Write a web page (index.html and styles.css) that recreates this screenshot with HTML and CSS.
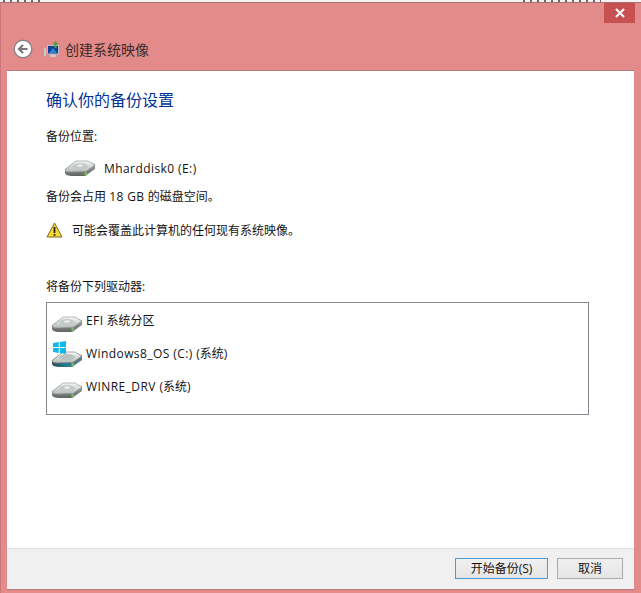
FILE: index.html
```html
<!DOCTYPE html>
<html lang="zh">
<head>
<meta charset="utf-8">
<title>创建系统映像</title>
<link rel="stylesheet" href="styles.css">
</head>
<body>
<svg class="defs" width="0" height="0" aria-hidden="true">
  <defs>
    <linearGradient id="top" x1="0" y1="0" x2="0" y2="1"><stop offset="0" stop-color="#f6f6f4"/><stop offset="1" stop-color="#b4bbb6"/></linearGradient>
    <linearGradient id="side" x1="0" y1="0" x2="0" y2="1"><stop offset="0" stop-color="#b0b3b2"/><stop offset="1" stop-color="#5f6463"/></linearGradient>
    <linearGradient id="sideos" x1="0" y1="0" x2="1" y2="0"><stop offset="0" stop-color="#3d4a50"/><stop offset=".45" stop-color="#1f7c96"/><stop offset="1" stop-color="#70787a"/></linearGradient>
    <symbol id="drive" viewBox="0 0 32 18">
      <path d="M1 10.500 12 2.500 31 5V10L21 17H7Q1 16.500 1 13.500Z" fill="url(#side)"/>
      <path d="M1 10.500 12 2 24 2 31 6 22 12.500 6 13Q1 13 1 10.500Z" fill="url(#top)" stroke="#8d9190" stroke-width=".6"/>
      <ellipse cx="16" cy="7.300" rx="7.500" ry="3.200" fill="#c3c9c6"/>
      <ellipse cx="16" cy="6.600" rx="3" ry="1.300" fill="#e9ecea"/>
      <rect x="20.500" y="13" width="2.500" height="3.600" fill="#74b858"/>
    </symbol>
    <symbol id="driveos" viewBox="0 0 32 18">
      <path d="M1 10.500 12 2.500 31 5V10L21 17H7Q1 16.500 1 13.500Z" fill="url(#sideos)"/>
      <path d="M1 10.500 12 2 24 2 31 6 22 12.500 6 13Q1 13 1 10.500Z" fill="url(#top)" stroke="#737a7a" stroke-width=".6"/>
      <ellipse cx="16" cy="7.300" rx="7.500" ry="3.200" fill="#b9c2c0"/>
      <rect x="20.500" y="13" width="2.500" height="3.600" fill="#74b858"/>
    </symbol>
  </defs>
</svg>
<div class="strip"><span class="frag frag-left"></span><span class="frag frag-right"></span></div>
<main class="window">
  <div class="titlearea">
    <div class="closerow"><span class="close">
      <svg width="10" height="10" viewBox="0 0 10 10"><path d="M1 1 9 9M9 1 1 9" stroke="#fff" stroke-width="2"/></svg>
    </span></div>
    <div class="navrow">
      <svg class="back" width="20" height="20" viewBox="0 0 20 20">
        <circle cx="10" cy="10" r="8.800" fill="#fff" stroke="#8a8587" stroke-width="1.400"/>
        <path d="M14.500 10H6.500M10 6 6 10 10 14" fill="none" stroke="#77767a" stroke-width="2.200"/>
      </svg>
      <svg class="appicon" width="16" height="17" viewBox="0 0 16 17">
        <rect x="3.500" y="4.500" width="11" height="8.500" fill="#123f96" stroke="#b8c0c4"/>
        <path d="M5 12 9 7 13 12Z" fill="#2e86d0"/>
        <rect x="0" y="7" width="2" height="8" fill="#c6cbcb"/>
        <rect x="6" y="13.500" width="6" height="2.500" fill="#c8cccc"/>
        <path d="M10.500 7V3.500H8.500L11.500 0 14.500 3.500H12.500V7Z" fill="#4da43a"/>
      </svg>
      <span class="apptitle">创建系统映像</span>
    </div>
  </div>
  <div class="content">
    <div class="body">
      <h1>确认你的备份设置</h1>
      <p class="label">备份位置:</p>
      <div class="target">
        <svg class="drive-lg" width="32" height="18"><use href="#drive"/></svg>
        <span class="latin">Mharddisk0 (E:)</span>
      </div>
      <p class="usage">备份会占用 <span class="latin">18 GB</span> 的磁盘空间。</p>
      <div class="warning">
        <svg width="17" height="16" viewBox="0 0 17 16">
          <path d="M8.500 1 16 15H1Z" fill="#f7d92f" stroke="#7a6a1c" stroke-linejoin="round"/>
          <rect x="7.600" y="5" width="1.800" height="6" fill="#222"/>
          <rect x="7.600" y="12" width="1.800" height="1.800" fill="#222"/>
        </svg>
        <span>可能会覆盖此计算机的任何现有系统映像。</span>
      </div>
      <p class="label listlabel">将备份下列驱动器:</p>
      <ul class="drives">
        <li><svg class="drive" width="32" height="18"><use href="#drive"/></svg><span class="name"><span class="latin">EFI</span> 系统分区</span></li>
        <li>
          <span class="osdrive">
            <svg class="drive" width="32" height="18"><use href="#driveos"/></svg>
            <svg class="winlogo" width="13" height="13" viewBox="0 0 13 13"><path d="M0 2 5.800 1.100V6.100H0ZM6.800 1 13 0V6.100H6.800ZM0 7.100H5.800V12L0 11.100ZM6.800 7.100H13V13L6.800 12Z" fill="#11b9ea"/></svg>
          </span>
          <span class="name"><span class="latin">Windows8_OS (C:) </span>(系统)</span>
        </li>
        <li><svg class="drive" width="32" height="18"><use href="#drive"/></svg><span class="name"><span class="latin">WINRE_DRV </span>(系统)</span></li>
      </ul>
    </div>
    <div class="footer">
      <button class="btn primary">开始备份(S)</button>
      <button class="btn">取消</button>
    </div>
  </div>
</main>
</body>
</html>
```
FILE: styles.css
```css
* { box-sizing: border-box; }
html, body { margin: 0; padding: 0; }
body {
  width: 641px;
  height: 593px;
  overflow: hidden;
  background: #fff;
  font-family: "Open Sans", "Noto Sans CJK SC", sans-serif;
  font-size: 12px;
  color: #141414;
}
.defs { position: absolute; }
.strip {
  height: 2px;
  overflow: hidden;
  background: #f4f2f2;
  display: flex;
  justify-content: space-between;
  padding: 0 40px 0 3px;
}
.frag { display: block; height: 2px; background: repeating-linear-gradient(90deg, #6a6a6a 0 2px, transparent 2px 7px); }
.frag-left { width: 42px; }
.frag-right { width: 78px; }
.window {
  height: 591px;
  background: #e38a8a;
  border-top: 1px solid #a97070;
  border-left: 1px solid #c87878;
  padding: 0 7px 4px 6px;
  display: flex;
  flex-direction: column;
}
.titlearea { height: 68px; flex: none; display: flex; flex-direction: column; }
.closerow { display: flex; justify-content: flex-end; margin-right: -1px; }
.close {
  width: 31px;
  height: 20px;
  background: #c75050;
  display: flex;
  align-items: center;
  justify-content: center;
}
.navrow { display: flex; align-items: center; margin-top: 16px; padding-left: 6px; }
.back { flex: none; }
.appicon { margin-left: 11px; flex: none; }
.apptitle { margin-left: 5px; font-size: 14px; color: #3a2a2a; }
.content {
  flex: 1;
  display: flex;
  flex-direction: column;
  background: #fff;
  box-shadow: 0 -1px 0 #b97a7a, 0 1px 0 #b97a7a;
}
.body { flex: 1; padding: 17px 39px 0 39px; }
h1 { margin: 0; font-size: 16px; font-weight: 400; line-height: 24px; color: #003399; }
p { margin: 0; }
.latin { letter-spacing: .42px; }
.label { margin-top: 16px; line-height: 18px; }
.target { display: flex; align-items: center; gap: 8px; margin-top: 12px; padding-left: 18px; height: 20px; }
.drive-lg { flex: none; }
.usage { margin-top: 10px; line-height: 18px; }
.warning { display: flex; align-items: center; gap: 9px; margin-top: 14px; height: 20px; }
.listlabel { margin-top: 38px; }
.drives {
  list-style: none;
  margin: 6px 0 0;
  padding: 3px 0 0 4px;
  width: 543px;
  height: 113px;
  border: 1px solid #828790;
}
.drives li { display: flex; align-items: center; height: 33px; }
.name { margin-top: -6px; margin-left: 3px; }
.drive { flex: none; display: block; margin-top: 2px; }
.osdrive { position: relative; display: block; flex: none; width: 32px; margin-top: 4px; }
.winlogo { position: absolute; left: 2px; top: -7px; }
.footer {
  height: 41px;
  flex: none;
  background: #f0f0f0;
  border-top: 1px solid #dfdfdf;
  display: flex;
  justify-content: flex-end;
  gap: 9px;
  padding: 9px 11px 0 0;
}
.btn {
  font: inherit;
  color: #141414;
  height: 21px;
  width: 66px;
  padding: 0 0 2px;
  background: linear-gradient(#f0f0f0, #e5e5e5);
  border: 1px solid #acacac;
}
.primary { width: 93px; border: 1px solid #4d9bd8; }
```
